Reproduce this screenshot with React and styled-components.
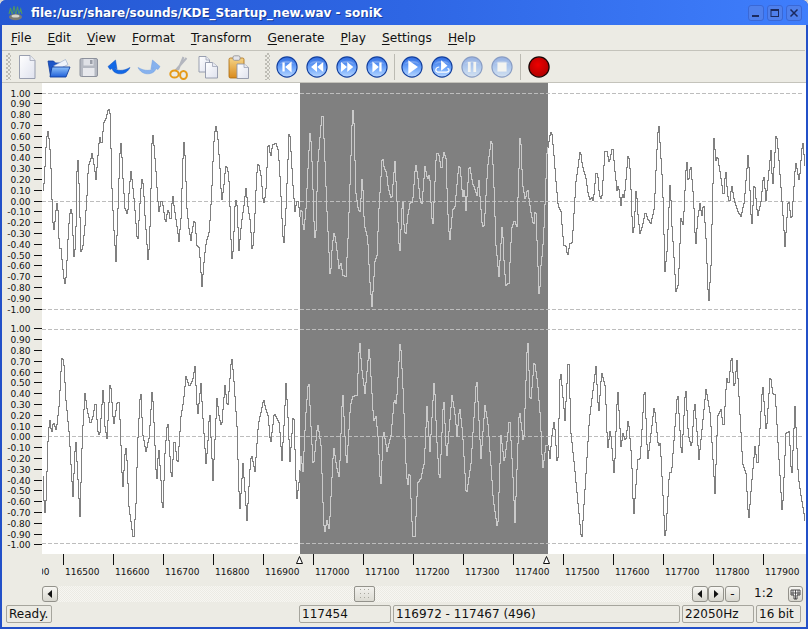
import React from "react";
import styled, { createGlobalStyle } from "styled-components";

const Global = createGlobalStyle`
  html, body { margin: 0; padding: 0; background: #d4d4d4; overflow: hidden; }
  #root { width: 808px; height: 629px; }
`;

const Window = styled.div`
  width: 808px; height: 629px; box-sizing: border-box;
  display: flex; flex-direction: column;
  background: #2350c8; border-radius: 6px 6px 0 0;
  padding-bottom: 2px;
  font-family: "DejaVu Sans", sans-serif; font-size: 12px; color: #111;
  overflow: hidden;
`;
const TitleBar = styled.div`
  height: 25px; flex: none; display: flex; align-items: center;
  padding: 0 6px 0 8px; box-sizing: border-box;
  background: linear-gradient(90deg, #2558d2 0%, #2e66e4 50%, #3f7efc 100%);
`;
const TitleText = styled.div`
  flex: 1; margin-left: 8px; color: #fff; font-weight: 700; font-size: 12px; white-space: nowrap;
  text-shadow: 1px 1px 0 #163a98;
`;
const WinButtons = styled.div`display: flex; gap: 3px; margin-right: 0;`;
const WinButton = styled.div`
  width: 16px; height: 16px; border-radius: 3px; box-sizing: border-box;
  background: #4f80ec; border: 1px solid #3a68d6;
  display: flex; align-items: center; justify-content: center;
`;
const Body = styled.div`
  flex: 1; margin: 0 2px; background: #ecebe4; display: flex; flex-direction: column; min-height: 0;
`;
const MenuBar = styled.div`
  height: 26px; flex: none; box-sizing: border-box; display: flex; align-items: center;
  padding: 1px 1px 0; margin-right: 1px;
  border-bottom: 1px solid #c4c3bb;
`;
const MenuItem = styled.span`padding: 0 8px; font-size: 12.2px; line-height: 24px; white-space: nowrap;`;
const Mnemonic = styled.span`text-decoration: underline; text-underline-offset: 2px; text-decoration-thickness: 1px;`;
const ToolBar = styled.div`
  height: 32px; flex: none; box-sizing: border-box; display: flex; align-items: center;
  padding-left: 4px; border-bottom: 1px solid #c4c3bb;
`;
const Grip = styled.div`
  width: 5px; height: 27px; flex: none; margin: ${p => p.$margin || "0 1px 0 0"};
  background: repeating-conic-gradient(#bebdb5 0 25%, transparent 0 50%) 0 0 / 4px 4px;
`;
const ToolButton = styled.div`
  width: 30px; height: 30px; flex: none; display: flex; align-items: center; justify-content: center;
`;
const Separator = styled.div`
  width: 1px; height: 26px; flex: none; background: #bcbbb3; margin: 0 ${p => p.$right || 2}px 0 ${p => p.$left || 2}px;
`;
const Chart = styled.svg`display: block; flex: none; width: 804px; height: 471px;`;
const Ruler = styled.svg`display: block; flex: none; width: 804px; height: 32px;`;
const AxisLabel = styled.text`font-family: "DejaVu Sans", sans-serif; font-size: 9px; fill: #111;`;
const ScrollRow = styled.div`
  height: 16px; flex: none; display: flex; align-items: stretch; padding: 0 3px 0 40px;
`;
const ScrollButton = styled.div`
  width: ${p => p.$w || 16}px; height: 16px; flex: none; box-sizing: border-box;
  margin-left: ${p => p.$ml || 0}px;
  border: 1px solid #93928b; border-radius: 3px;
  background: linear-gradient(#f8f7f3, #d8d7cf);
  display: flex; align-items: center; justify-content: center;
`;
const ScrollTrack = styled.div`
  flex: 1; display: flex; min-width: 0;
  background: repeating-conic-gradient(#f7f6f2 0 25%, #ecebe4 0 50%) 0 0 / 2px 2px;
`;
const ScrollThumb = styled.div`
  width: 21px; height: 16px; margin-left: 296px; box-sizing: border-box;
  border: 1px solid #93928b; border-radius: 2px;
  background: linear-gradient(#f3f2ee, #dcdbd3);
  display: flex; align-items: center; justify-content: center;
`;
const ZoomLabel = styled.div`
  flex: none; margin: 0 15px 0 14px; width: 19px; line-height: 15px; white-space: nowrap;
`;
const StatusBar = styled.div`
  height: 18px; flex: none; display: flex; margin: 3px 0 4px; padding-left: 4px;
`;
const Panel = styled.div`
  flex: none; box-sizing: border-box; width: ${p => p.$w}px; margin-left: ${p => p.$ml || 0}px;
  border: 1px solid #a6a59d; border-radius: 2px; padding-left: 2px;
  line-height: 16px; white-space: nowrap; overflow: hidden;
`;

const seg = (flat, x0, y0) => {
  const out = [];
  for (let i = 0; i < flat.length; i += 2) out.push([x0 + flat[i] / 3, y0 + flat[i + 1] / 3]);
  return out;
};

const topPts = [
  ...seg([126,316,130,290,134,200,140,133,146,175,150,250,155,405,159,432,163,400,167,350,171,375,175,490,180,490,185,545,191,600,196,570,200,480,205,400,209,368,213,385,219,515,224,480,228,260,230,212,233,260,240,500,245,490,252,420,258,330,262,245,270,220,273,205,278,230,285,282,290,225,296,152,302,185,308,115,315,100,323,70,328,90,332,290,338,420,345,528,350,400,354,280,358,180,361,175,366,280,372,370,380,390,385,310,390,260,394,290,400,350,410,480,416,370,422,280,427,300,432,390,442,540,448,400,454,130,458,170,464,245,470,340,474,378,480,350,484,350,494,415,500,375,505,385,509,415,515,325,520,370,526,410,534,468,540,400,548,160,552,210,558,370,565,440,570,465,575,430,581,400,588,480,595,490,603,605,610,520,616,470,625,440,632,325,638,180,644,118,650,150,657,250,662,350,668,310,674,245,680,250,685,300,692,530,697,490,703,340,708,360,714,497,722,410,728,370,735,310,742,375,748,410,754,505,760,430,767,270,772,232,780,270,786,340,790,355,795,310,802,165,808,210], 0, 85),
  ...seg([0,210,5,178,15,176,22,195,28,290,33,400,38,490,45,370,55,125,60,200,66,300,72,380,77,350,82,350,87,395,92,365,98,445,105,370,112,230,118,130,124,250,130,440,134,475,140,240,150,120,155,75,160,180,168,380,172,460,178,588,184,480,190,440,196,480,204,550,210,535,216,570,225,575,232,440,238,270,245,62,250,130,254,320,262,375,268,380,274,265,280,420,290,460,296,580,303,665,308,590,312,530,318,510,324,370,334,210,340,250,347,265,352,310,362,345,372,228,378,350,386,518,395,330,400,440,405,445,410,395,417,355,425,350,434,235,440,270,448,350,453,355,462,245,470,285,476,265,482,395,486,415,496,205,503,205,512,258,518,198,525,220,530,370,536,475,545,375,552,365,563,243,568,250,575,340,580,310,585,375,595,236,605,295,618,330,624,285,628,350,634,425,640,420,650,245,662,155,668,280,675,480,684,575,694,410,700,550,705,600,714,595,722,430,730,405,738,425,748,132,755,300,763,345,770,308,778,370,788,425,794,360,800,520,805,650,810,540,815,495,820,410,828,205], 270, 85),
  ...seg([27,150,32,138,38,200,45,290,52,365,60,380,68,480,75,483,80,515,86,478,94,470,100,370,105,290,118,195,124,240,135,280,142,330,148,345,152,335,157,350,165,265,170,265,175,330,182,345,192,198,198,200,205,235,215,182,222,260,228,315,232,300,240,360,245,325,250,340,262,203,268,260,275,450,280,420,286,300,290,380,297,445,305,420,313,380,322,405,330,415,340,370,347,210,353,108,358,190,365,300,372,560,378,500,388,280,392,410,398,500,405,620,412,600,420,400,427,420,437,215,442,300,449,235,458,345,464,490,470,400,478,350,482,400,488,350,495,460,503,665,510,540,515,340,519,160,525,225,530,215,540,280,548,340,554,250,560,330,566,355,572,300,580,345,590,378,600,395,610,350,622,200,632,435,640,285,650,395,660,350,668,265,675,345,690,195,695,310,706,140,712,200,725,375,732,485,742,340,752,410,764,230,775,290,785,165,792,240], 540, 85),
];
const bottomPts = [
  ...seg([126,470,131,590,136,530,140,380,146,295,152,340,157,305,166,330,175,250,182,115,188,120,195,240,205,345,212,470,216,528,224,350,230,460,237,590,244,350,252,220,258,265,268,312,276,290,284,240,290,330,296,350,307,198,312,320,318,355,328,178,338,318,348,250,355,247,362,430,365,515,374,373,378,420,384,560,398,665,405,550,410,370,419,200,425,340,435,395,445,350,454,202,460,330,467,495,473,378,480,480,485,590,492,400,500,295,505,380,512,488,520,350,530,440,540,290,548,240,555,170,565,200,575,180,582,140,590,290,600,190,605,280,615,430,620,380,626,265,636,480,648,235,655,295,662,320,672,195,680,268,692,108,698,170,708,320,716,580,726,430,738,600,748,430,752,403,762,455,772,315,788,238,795,268,802,290,808,365], 0, 320),
  ...seg([0,365,10,278,15,290,25,310,33,420,40,300,45,190,50,270,57,425,68,268,75,480,77,545,85,480,90,408,96,455,104,290,113,172,120,320,127,445,140,310,150,375,158,605,161,640,168,600,175,630,180,530,188,378,197,440,205,475,215,205,221,330,227,445,238,260,245,230,258,225,266,55,272,145,282,220,295,78,300,170,308,305,315,290,322,360,329,515,337,325,348,393,360,345,370,236,376,255,388,58,395,180,405,430,410,505,416,445,425,650,432,650,440,490,450,475,460,428,468,258,477,395,490,175,497,350,506,495,518,225,527,420,543,225,553,290,558,350,566,258,575,340,586,530,600,430,617,170,630,415,642,255,652,320,667,540,680,632,690,345,700,430,708,365,716,290,725,450,732,608,745,265,758,375,770,42,778,260,790,120,800,190,808,290,815,450,825,375,832,375], 270, 320),
  ...seg([27,415,33,345,40,300,50,450,58,140,72,300,83,98,90,340,100,435,122,665,135,460,145,300,165,138,173,285,182,155,193,200,200,392,208,325,220,470,230,200,240,380,246,340,254,365,262,295,272,415,278,595,290,420,298,415,311,190,320,425,340,257,352,378,358,370,373,665,385,460,392,455,410,212,422,415,434,197,442,345,452,385,461,240,474,418,495,207,508,285,522,520,530,290,540,268,548,330,557,172,563,197,572,100,580,212,588,120,605,430,615,460,623,605,632,490,642,380,650,445,665,190,676,340,688,160,695,220,703,225,710,350,724,585,735,340,745,335,752,480,762,258,772,470,782,540,792,600], 540, 320),
];

const stepPath = pts => {
  const sx = Math.floor(pts[0][0]);
  const ex = Math.floor(pts[pts.length - 1][0]);
  let i = 0;
  let d = "";
  for (let x = sx; x <= ex; x++) {
    while (i < pts.length - 2 && pts[i + 1][0] < x) i++;
    const [ax, ay] = pts[i];
    const [bx, by] = pts[i + 1];
    const t = bx === ax ? 0 : Math.max(0, Math.min(1, (x - ax) / (bx - ax)));
    const y = Math.floor(ay + (by - ay) * t) + 0.5;
    d += x === sx ? `M${x + 0.5} ${y}` : `H${x + 0.5}V${y}`;
  }
  return d;
};

const fmt = v => (v < 0 ? "-" : "") + Math.abs(v).toFixed(2);
const axis = base =>
  Array.from({ length: 21 }, (_, i) => ({
    y: Math.floor(base + 10.8 * i) + 0.5,
    label: fmt((10 - i) / 10),
  }));

const Channel = ({ pts, base, lines }) => {
  const d = stepPath(pts);
  return (
    <>
      {axis(base).map(t => (
        <g key={t.label}>
          <line x1="34" x2="42" y1={t.y} y2={t.y} stroke="#111" />
          <AxisLabel x="30.5" y={t.y + 3.5} textAnchor="end">{t.label}</AxisLabel>
        </g>
      ))}
      {lines.map(y => (
        <line key={y} x1="42" x2="804" y1={y} y2={y} stroke="#bdbdbd" strokeDasharray="4 2" />
      ))}
      <path d={d} fill="none" stroke="#808080" shapeRendering="crispEdges" />
      <path d={d} fill="none" stroke="#cacaca" shapeRendering="crispEdges" clipPath="url(#sel)" />
    </>
  );
};

const WaveChart = () => (
  <Chart viewBox="2 83 804 471">
    <defs>
      <clipPath id="sel"><rect x="300" y="83" width="248" height="471" /></clipPath>
    </defs>
    <rect x="42" y="83" width="764" height="471" fill="#fff" />
    <rect x="300" y="83" width="248" height="471" fill="#808080" />
    <Channel pts={topPts} base={93} lines={[93.5, 201.5, 309.5]} />
    <Channel pts={bottomPts} base={328.9} lines={[329.5, 436.5, 543.5]} />
  </Chart>
);

const TimeRuler = () => (
  <Ruler viewBox="2 554 804 32">
    <defs>
      <clipPath id="rulerclip"><rect x="42" y="554" width="762" height="32" /></clipPath>
    </defs>
    <g clipPath="url(#rulerclip)">
      {Array.from({ length: 16 }, (_, i) => {
        const x = 13.5 + i * 50;
        return (
          <g key={i}>
            {i > 0 && <line x1={x} x2={x} y1="554" y2="565" stroke="#111" />}
            <AxisLabel x={x + 1.6} y="575">{116400 + i * 100}</AxisLabel>
          </g>
        );
      })}
    </g>
    <polygon points="299.5,556.5 296.5,563.5 302.5,563.5" fill="#fff" stroke="#111" />
    <polygon points="546.5,556.5 543.5,563.5 549.5,563.5" fill="#fff" stroke="#111" />
  </Ruler>
);

const TitleLogo = () => (
  <svg width="15" height="17" viewBox="0 0 15 17">
    <ellipse cx="7.5" cy="13" rx="6.5" ry="3.2" fill="#7c7c74" />
    <ellipse cx="7.5" cy="12" rx="4" ry="1.6" fill="#d6d6cc" />
    <path d="M1 10 L2.5 4 L4 10 M4.5 10 L6 2 L7.5 10 M8 10 L9.5 2.5 L11 10 M11 10 L12.7 5 L14 10" fill="none" stroke="#4f9468" strokeWidth="1.1" />
  </svg>
);

const Icon = ({ dx = 0, dy = 0, children }) => (
  <svg width="26" height="26" viewBox="0 0 26 26" overflow="visible">
    <g transform={`translate(${dx} ${dy})`}>{children}</g>
  </svg>
);

const Page = ({ d = "M6 2 H16 L21 7 V24 H6 Z", fold = "M16 2 V7 H21" }) => (
  <>
    <path d={d} fill="url(#pageG)" stroke="#8f95a8" strokeWidth="0.9" />
    <path d={fold} fill="#e8eaf2" stroke="#a0a5b5" strokeWidth="0.8" />
  </>
);

const SharedDefs = () => (
  <svg width="0" height="0" style={{ position: "absolute" }}>
    <defs>
      <linearGradient id="pageG" x1="0" y1="0" x2="1" y2="1">
        <stop offset="0" stopColor="#ffffff" /><stop offset="1" stopColor="#dfe2ee" />
      </linearGradient>
      <linearGradient id="blueG" x1="0" y1="0" x2="0" y2="1">
        <stop offset="0" stopColor="#2f6be0" /><stop offset="0.55" stopColor="#6ea6fb" /><stop offset="1" stopColor="#b9d7ff" />
      </linearGradient>
      <linearGradient id="folderG" x1="0" y1="0" x2="0" y2="1">
        <stop offset="0" stopColor="#8ec2fb" /><stop offset="1" stopColor="#1f5fd8" />
      </linearGradient>
      <linearGradient id="clipG" x1="0" y1="0" x2="0" y2="1">
        <stop offset="0" stopColor="#f5d488" /><stop offset="1" stopColor="#d98a1c" />
      </linearGradient>
      <radialGradient id="redG" cx="0.45" cy="0.4" r="0.6">
        <stop offset="0" stopColor="#ee0000" /><stop offset="1" stopColor="#b00000" />
      </radialGradient>
    </defs>
  </svg>
);

const NewIcon = () => <Icon><Page d="M5.5 1.5 H16 L21 6.5 V24.5 H5.5 Z" fold="M16 1.5 V6.5 H21" /></Icon>;
const OpenIcon = () => (
  <Icon dx={1.5}>
    <path d="M2.5 7 H8 L10 9 H18 V22 H5 Z" fill="#1d56c8" stroke="#123f9e" strokeWidth="0.8" />
    <path d="M8 12 L20 5.5 L22.5 10.5 L12 16 Z" fill="#eef3fb" stroke="#8fa4c8" strokeWidth="0.6" />
    <path d="M6.5 13 H24.5 L20.5 23 H4.5 Z" fill="url(#folderG)" stroke="#123f9e" strokeWidth="0.9" />
  </Icon>
);
const SaveIcon = () => (
  <Icon dx={1.5}>
    <rect x="4.5" y="4.5" width="17.5" height="18" rx="1.5" fill="#b5b9c2" stroke="#8d919c" />
    <rect x="8" y="5" width="10" height="6.5" fill="#dfe1e6" />
    <rect x="14.5" y="6" width="2.5" height="4" fill="#9a9ea8" />
    <rect x="7.5" y="14" width="11.5" height="8" fill="#e8e9ed" />
  </Icon>
);
const UndoIcon = () => (
  <Icon dx={2}>
    <path d="M2 12.5 L9.5 6 L11 15 L8.5 13.8 C10.5 17 17 17.5 24 13.5 C21 19.5 15.5 20.5 11.5 19.5 C8.5 18.7 6.8 17 6 14.5 L4 15.5 Z" fill="#1268e6" stroke="#0e50c0" strokeWidth="0.5" />
  </Icon>
);
const RedoIcon = () => (
  <Icon dx={2}>
    <path d="M24 12.5 L16.5 6 L15 15 L17.5 13.8 C15.5 17 9 17.5 2 13.5 C5 19.5 10.5 20.5 14.5 19.5 C17.5 18.7 19.2 17 20 14.5 L22 15.5 Z" fill="#87b2ee" stroke="#6d9ce0" strokeWidth="0.5" />
  </Icon>
);
const CutIcon = () => (
  <Icon dx={3} dy={1}>
    <path d="M16.5 2 L11 15 M19.5 3 L8.5 15.5" stroke="#b3b6be" strokeWidth="2" fill="none" />
    <ellipse cx="7.5" cy="19" rx="4.2" ry="3.6" fill="none" stroke="#e59a18" strokeWidth="2" />
    <ellipse cx="16.5" cy="20" rx="3.4" ry="4" fill="none" stroke="#e59a18" strokeWidth="2" />
  </Icon>
);
const CopyIcon = () => (
  <Icon dx={1}>
    <Page d="M4 2.5 H11 L14.5 6 V18 H4 Z" fold="M11 2.5 V6 H14.5" />
    <Page d="M10.5 8.5 H17.5 L22.5 12.5 V24 H10.5 Z" fold="M17.5 8.5 V12.5 H22.5" />
  </Icon>
);
const PasteIcon = () => (
  <Icon dx={1}>
    <rect x="4" y="4" width="15" height="20" rx="1.5" fill="url(#clipG)" stroke="#a86a10" strokeWidth="0.8" />
    <rect x="8" y="1.8" width="7" height="4.5" rx="1.5" fill="#e4e5ea" stroke="#8c8c90" strokeWidth="0.8" />
    <Page d="M12 10 H19 L23.5 13.5 V24.5 H12 Z" fold="M19 10 V13.5 H23.5" />
  </Icon>
);

const glyphs = {
  first: "M7 7 H9.5 V17 H7 Z M17 6 V18 L10 12 Z",
  rewind: "M12 6.5 V17.5 L5.5 12 Z M18.8 6.5 V17.5 L12.3 12 Z",
  forward: "M5.5 6.5 V17.5 L12 12 Z M12.3 6.5 V17.5 L18.8 12 Z",
  last: "M7 6 V18 L14 12 Z M14.5 7 H17 V17 H14.5 Z",
  play: "M8 4.5 V19.5 L18.5 12 Z",
  loop: "M11 4.5 V16 L18 10.5 Z",
  pause: "M7.5 6.5 H10.5 V17.5 H7.5 Z M13.5 6.5 H16.5 V17.5 H13.5 Z",
  stop: "M7 7 H17 V17 H7 Z",
};

const MediaIcon = ({ glyph, off }) => (
  <svg width="22" height="22" viewBox="0 0 24 24" opacity={off ? 0.45 : 1}>
    <circle cx="12" cy="12" r="11" fill="url(#blueG)" stroke="#123f9e" strokeWidth="1.2" />
    <path d="M4.2 9 C6 4 18 4 19.8 9 C16 7.2 8 7.2 4.2 9 Z" fill="#ffffff" opacity="0.22" />
    <path d={glyphs[glyph]} fill="#fff" />
    {glyph === "loop" && (
      <path d="M9 12 C5 12 4 16.5 7 17.5 H17 C20.5 17.5 20.5 14 18 13.5" fill="none" stroke="#fff" strokeWidth="1.3" />
    )}
  </svg>
);

const RecordIcon = () => (
  <svg width="22" height="22" viewBox="0 0 24 24">
    <circle cx="12" cy="12" r="11" fill="url(#redG)" stroke="#1a0505" strokeWidth="1.4" />
  </svg>
);

const Tri = ({ right }) => (
  <svg width="6" height="8" viewBox="0 0 6 8">
    <path d={right ? "M1 0 V8 L5.5 4 Z" : "M5 0 V8 L0.5 4 Z"} fill="#111" />
  </svg>
);
const ThumbDots = () => (
  <svg width="11" height="10" viewBox="0 0 11 10">
    {[0, 4, 8].map(y => [0, 4, 8].map(x => (
      <rect key={`${x}-${y}`} x={x + 1} y={y} width="1" height="1" fill="#a9a8a0" />
    )))}
  </svg>
);
const FitIcon = () => (
  <svg width="11" height="11" viewBox="0 0 11 11">
    <path d="M1 1 H10 V6 H7 V10 H4 V6 H1 Z" fill="#fff" stroke="#222" strokeWidth="0.8" />
    <path d="M5.5 1 V10 M1 4 H10 M3 1 V6 M8 1 V6" stroke="#333" strokeWidth="0.8" />
  </svg>
);

const menu = [["F", "ile"], ["E", "dit"], ["V", "iew"], ["F", "ormat"], ["T", "ransform"], ["G", "enerate"], ["P", "lay"], ["S", "ettings"], ["H", "elp"]];

export default function App() {
  return (
    <Window>
      <Global />
      <SharedDefs />
      <TitleBar>
        <TitleLogo />
        <TitleText>file:/usr/share/sounds/KDE_Startup_new.wav - soniK</TitleText>
        <WinButtons>
          <WinButton>
            <svg width="10" height="10" viewBox="0 0 10 10"><rect x="1" y="7" width="7" height="2" fill="#1b2a5e" /></svg>
          </WinButton>
          <WinButton>
            <svg width="10" height="10" viewBox="0 0 10 10"><rect x="1" y="1.5" width="7.5" height="7" fill="none" stroke="#1b2a5e" /><rect x="1" y="1" width="8" height="2" fill="#1b2a5e" /></svg>
          </WinButton>
          <WinButton>
            <svg width="10" height="10" viewBox="0 0 10 10"><path d="M1.5 1.5 L8.5 8.5 M8.5 1.5 L1.5 8.5" stroke="#1b2a5e" strokeWidth="1.5" /></svg>
          </WinButton>
        </WinButtons>
      </TitleBar>
      <Body>
        <MenuBar>
          {menu.map(([m, rest]) => (
            <MenuItem key={m + rest}><Mnemonic>{m}</Mnemonic>{rest}</MenuItem>
          ))}
        </MenuBar>
        <ToolBar>
          <Grip />
          <ToolButton><NewIcon /></ToolButton>
          <ToolButton><OpenIcon /></ToolButton>
          <ToolButton><SaveIcon /></ToolButton>
          <ToolButton><UndoIcon /></ToolButton>
          <ToolButton><RedoIcon /></ToolButton>
          <ToolButton><CutIcon /></ToolButton>
          <ToolButton><CopyIcon /></ToolButton>
          <ToolButton><PasteIcon /></ToolButton>
          <Grip $margin="0 2px 0 13px" />
          <ToolButton><MediaIcon glyph="first" /></ToolButton>
          <ToolButton><MediaIcon glyph="rewind" /></ToolButton>
          <ToolButton><MediaIcon glyph="forward" /></ToolButton>
          <ToolButton><MediaIcon glyph="last" /></ToolButton>
          <Separator $left={2} $right={2} />
          <ToolButton><MediaIcon glyph="play" /></ToolButton>
          <ToolButton><MediaIcon glyph="loop" /></ToolButton>
          <ToolButton><MediaIcon glyph="pause" off /></ToolButton>
          <ToolButton><MediaIcon glyph="stop" off /></ToolButton>
          <Separator $left={3} $right={3} />
          <ToolButton><RecordIcon /></ToolButton>
        </ToolBar>
        <WaveChart />
        <TimeRuler />
        <ScrollRow>
          <ScrollButton><Tri /></ScrollButton>
          <ScrollTrack>
            <ScrollThumb><ThumbDots /></ScrollThumb>
          </ScrollTrack>
          <ScrollButton><Tri /></ScrollButton>
          <ScrollButton><Tri right /></ScrollButton>
          <ScrollButton $w={15} $ml={1}>-</ScrollButton>
          <ZoomLabel>1:2</ZoomLabel>
          <ScrollButton $w={15}><FitIcon /></ScrollButton>
        </ScrollRow>
        <StatusBar>
          <Panel $w={46}>Ready.</Panel>
          <Panel $w={92} $ml={247}>117454</Panel>
          <Panel $w={287} $ml={2}>116972 - 117467 (496)</Panel>
          <Panel $w={72} $ml={2}>22050Hz</Panel>
          <Panel $w={45} $ml={2}>16 bit</Panel>
        </StatusBar>
      </Body>
    </Window>
  );
}
